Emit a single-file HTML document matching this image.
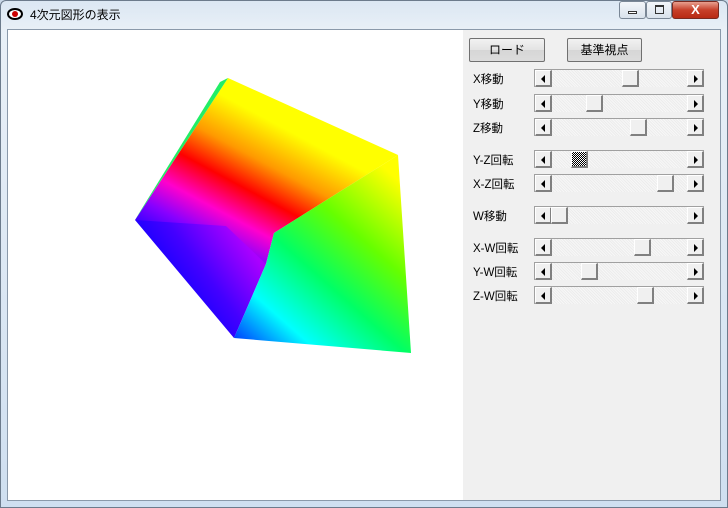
<!DOCTYPE html>
<html><head><meta charset="utf-8"><style>
*{margin:0;padding:0;box-sizing:border-box}
body{width:728px;height:508px;overflow:hidden;background:#c9d8e8;font-family:"Liberation Sans","Noto Sans CJK JP",sans-serif;position:relative}
.frame{position:absolute;left:0;top:0;width:728px;height:508px;background:linear-gradient(180deg,#dbe7f3 0,#e9f0f7 30px,#cfdff0 100%);border:1px solid #6c7b8c;border-radius:6px 6px 0 0}
.title{position:absolute;left:30px;top:6px;font-size:12px;color:#000}
.client{position:absolute;left:7px;top:29px;width:714px;height:472px;border:1px solid #8a99aa;background:#f0f0f0}
.canvas{position:absolute;left:0;top:0;width:455px;height:470px;background:#fff}
.btn{position:absolute;height:24px;border:1px solid #707070;border-radius:2px;background:linear-gradient(#f2f2f2,#e3e3e3 50%,#d6d6d6 51%,#dcdcdc);font-size:12px;text-align:center;line-height:22px}
.lbl{position:absolute;left:465px;font-size:11.5px;color:#000}
.sl{position:absolute;left:526px;width:170px;height:18px;border-top:1px solid #a0a0a0;border-left:1px solid #a0a0a0;background:repeating-linear-gradient(45deg,#f7f7f7 0 1px,#ececec 1px 2px)}
.ar,.th{position:absolute;top:0;width:17px;height:17px;background:#f0f0f0;border-right:2px solid #808080;border-bottom:2px solid #808080;border-left:1px solid #fff;border-top:1px solid #fff}
.ar.l{left:0}.ar.r{right:0}
.ar.l:after{content:"";position:absolute;left:5px;top:4px;border-right:4px solid #000;border-top:4px solid transparent;border-bottom:4px solid transparent}
.ar.r:after{content:"";position:absolute;left:6px;top:4px;border-left:4px solid #000;border-top:4px solid transparent;border-bottom:4px solid transparent}
.cb{position:absolute;top:1px;height:18px;border:1px solid #7a8796;border-radius:3px;background:linear-gradient(#f3f6fa,#d9e2ec)}
</style></head><body>
<div class="frame"></div>
<svg style="position:absolute;left:7px;top:6px" width="16" height="16"><ellipse cx="8" cy="8" rx="7" ry="5" fill="#fff" stroke="#000" stroke-width="2"/><circle cx="8" cy="8" r="3" fill="#c00"/></svg>
<div class="title">4次元図形の表示</div>
<div class="cb" style="left:619px;width:27px"><div style="position:absolute;left:8px;top:9px;width:9px;height:3px;border:1px solid #333;background:#fff"></div></div>
<div class="cb" style="left:646px;width:26px"><div style="position:absolute;left:8px;top:3px;width:9px;height:9px;border:1px solid #333;border-top-width:2px"></div></div>
<div class="cb" style="left:672px;width:47px;background:linear-gradient(#e8a08f,#c7402a 50%,#b82a14);border-color:#7a2a20;color:#fff;font-size:13px;font-weight:bold;text-align:center;line-height:16px">X</div>
<div class="client">
<div class="canvas">
<svg width="455" height="470" style="position:absolute;left:0;top:0">
<defs>
<linearGradient id="ga" gradientUnits="userSpaceOnUse" x1="270" y1="95" x2="195" y2="235"><stop offset="0" stop-color="#ffff00"/><stop offset=".25" stop-color="#ff9900"/><stop offset=".45" stop-color="#ff0000"/><stop offset=".65" stop-color="#ff00cc"/><stop offset=".82" stop-color="#8800ff"/><stop offset="1" stop-color="#2200ff"/></linearGradient>
<linearGradient id="gb" gradientUnits="userSpaceOnUse" x1="390" y1="150" x2="240" y2="320"><stop offset="0" stop-color="#ffff00"/><stop offset=".3" stop-color="#66ff00"/><stop offset=".55" stop-color="#00ff66"/><stop offset=".8" stop-color="#00ffff"/><stop offset="1" stop-color="#0044ff"/></linearGradient>
<linearGradient id="gc" gradientUnits="userSpaceOnUse" x1="250" y1="230" x2="170" y2="290"><stop offset="0" stop-color="#aa00ff"/><stop offset=".5" stop-color="#4400ff"/><stop offset="1" stop-color="#0000ff"/></linearGradient>
</defs>
<polygon points="220,48 390,125 266,203 258,234 127,190" fill="url(#ga)"/>
<polygon points="127,190 218,196 258,234 226,308" fill="url(#gc)"/>
<polygon points="390,125 403,323 226,308 258,234 266,203" fill="url(#gb)"/>
<polygon points="220,48 127,190 133,180 212,52" fill="#22ee66"/>
</svg>
</div>
<div class="btn" style="left:461px;top:8px;width:76px">ロード</div>
<div class="btn" style="left:559px;top:8px;width:75px">基準視点</div>
<div class="lbl" style="top:41px">X移動</div><div class="sl" style="top:39px"><div class="ar l"></div><div class="th" style="left:87px"></div><div class="ar r"></div></div>
<div class="lbl" style="top:66px">Y移動</div><div class="sl" style="top:64px"><div class="ar l"></div><div class="th" style="left:51px"></div><div class="ar r"></div></div>
<div class="lbl" style="top:90px">Z移動</div><div class="sl" style="top:88px"><div class="ar l"></div><div class="th" style="left:95px"></div><div class="ar r"></div></div>
<div class="lbl" style="top:122px">Y-Z回転</div><div class="sl" style="top:120px"><div class="ar l"></div><div class="th" style="left:36px;background:repeating-conic-gradient(#000 0 25%,#fff 0 50%) 0 0/2px 2px"></div><div class="ar r"></div></div>
<div class="lbl" style="top:146px">X-Z回転</div><div class="sl" style="top:144px"><div class="ar l"></div><div class="th" style="left:122px"></div><div class="ar r"></div></div>
<div class="lbl" style="top:178px">W移動</div><div class="sl" style="top:176px"><div class="ar l"></div><div class="th" style="left:16px"></div><div class="ar r"></div></div>
<div class="lbl" style="top:210px">X-W回転</div><div class="sl" style="top:208px"><div class="ar l"></div><div class="th" style="left:99px"></div><div class="ar r"></div></div>
<div class="lbl" style="top:234px">Y-W回転</div><div class="sl" style="top:232px"><div class="ar l"></div><div class="th" style="left:46px"></div><div class="ar r"></div></div>
<div class="lbl" style="top:258px">Z-W回転</div><div class="sl" style="top:256px"><div class="ar l"></div><div class="th" style="left:102px"></div><div class="ar r"></div></div>
</div>
</body></html>
